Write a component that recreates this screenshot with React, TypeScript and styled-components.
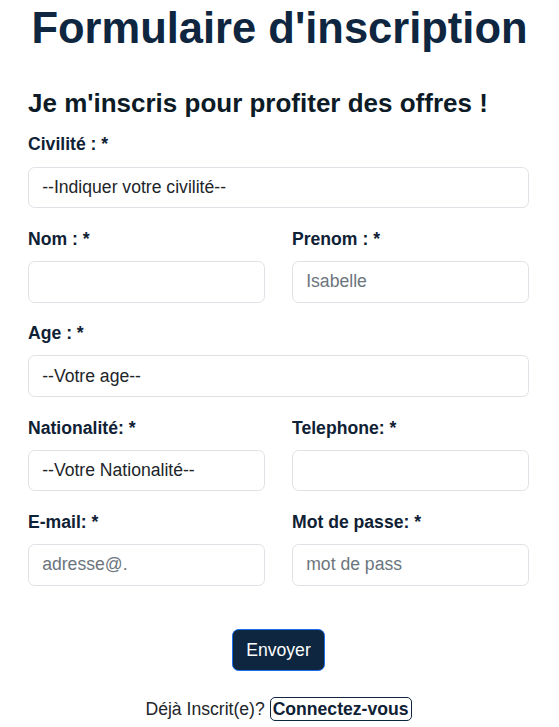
import React from "react";
import styled, { createGlobalStyle } from "styled-components";

const GlobalStyle = createGlobalStyle`
  html, body { margin: 0; padding: 0; background: #ffffff; }
  body {
    font-family: "Liberation Sans", Arial, sans-serif;
    font-size: 17.6px;
    line-height: 1.5;
    color: #212529;
  }
  * { box-sizing: border-box; }
`;

const Page = styled.main`
  padding-top: 2px;
`;

const Content = styled.div`
  padding: 0 30px 0 28px;
`;

const Title = styled.h1`
  margin: 0;
  font-size: 43.5px;
  line-height: 1.2;
  font-weight: 700;
  color: #0f2640;
  text-align: center;
  white-space: nowrap;
`;

const Subtitle = styled.h2`
  margin: 34px 0 12px;
  font-size: 26px;
  line-height: 1.2;
  font-weight: 700;
  color: #0d1b27;
`;

const Form = styled.form`
  display: flex;
  flex-direction: column;
`;

const Row = styled.div<{ $cols?: number }>`
  display: grid;
  grid-template-columns: repeat(${(p) => p.$cols ?? 1}, 1fr);
  column-gap: 27px;
`;

const Field = styled.div`
  display: flex;
  flex-direction: column;
  margin-bottom: 17.6px;
`;

const Label = styled.label`
  display: block;
  font-size: 17.6px;
  line-height: 1.5;
  font-weight: 700;
  color: #0f2135;
  margin-bottom: 8.8px;
`;

const controlCss = `
  display: block;
  width: 100%;
  height: 41.6px;
  padding: 6.6px 13.2px;
  font-family: "Liberation Sans", Arial, sans-serif;
  font-size: 17.6px;
  line-height: 1.5;
  color: #212529;
  background: #fff;
  border: 1px solid #dee2e6;
  border-radius: 6.6px;
  outline: none;
`;

const Input = styled.input`
  ${controlCss}
  &::placeholder { color: #6c757d; opacity: 1; }
`;

const Select = styled.select`
  ${controlCss}
  appearance: none;
  -webkit-appearance: none;
`;

const Actions = styled.div`
  display: flex;
  justify-content: center;
  margin-top: 26px;
`;

const SubmitButton = styled.button`
  height: 41.6px;
  padding: 6.6px 13.2px;
  font-family: "Liberation Sans", Arial, sans-serif;
  font-size: 17.6px;
  line-height: 1.5;
  color: #ffffff;
  background: #0e2640;
  border: 1px solid #1a6ff0;
  border-radius: 6.6px;
  cursor: pointer;
`;

const Footer = styled.p`
  margin: 25px 0 0;
  text-align: center;
  font-size: 17.6px;
  line-height: 1.5;
  color: #212529;
`;

const LoginLink = styled.a`
  padding: 1px 2px;
  font-weight: 700;
  color: #0f2135;
  text-decoration: none;
  border: 1px solid #0f2640;
  border-radius: 5px;
`;

export default function App() {
  return (
    <>
      <GlobalStyle />
      <Page>
        <Title>Formulaire d'inscription</Title>
        <Content>
          <Subtitle>Je m'inscris pour profiter des offres !</Subtitle>
          <Form onSubmit={(e) => e.preventDefault()}>
            <Row>
              <Field>
                <Label htmlFor="civ">Civilité : *</Label>
                <Select id="civ" defaultValue="">
                  <option value="">--Indiquer votre civilité--</option>
                  <option value="mme">Madame</option>
                  <option value="m">Monsieur</option>
                </Select>
              </Field>
            </Row>
            <Row $cols={2}>
              <Field>
                <Label htmlFor="nom">Nom : *</Label>
                <Input id="nom" type="text" />
              </Field>
              <Field>
                <Label htmlFor="prenom">Prenom : *</Label>
                <Input id="prenom" type="text" placeholder="Isabelle" />
              </Field>
            </Row>
            <Row>
              <Field>
                <Label htmlFor="age">Age : *</Label>
                <Select id="age" defaultValue="">
                  <option value="">--Votre age--</option>
                </Select>
              </Field>
            </Row>
            <Row $cols={2}>
              <Field>
                <Label htmlFor="nat">Nationalité: *</Label>
                <Select id="nat" defaultValue="">
                  <option value="">--Votre Nationalité--</option>
                </Select>
              </Field>
              <Field>
                <Label htmlFor="tel">Telephone: *</Label>
                <Input id="tel" type="tel" />
              </Field>
            </Row>
            <Row $cols={2}>
              <Field>
                <Label htmlFor="mail">E-mail: *</Label>
                <Input id="mail" type="email" placeholder="adresse@." />
              </Field>
              <Field>
                <Label htmlFor="pass">Mot de passe: *</Label>
                <Input id="pass" type="text" placeholder="mot de pass" />
              </Field>
            </Row>
            <Actions>
              <SubmitButton type="submit">Envoyer</SubmitButton>
            </Actions>
          </Form>
          <Footer>
            Déjà Inscrit(e)? <LoginLink href="#">Connectez-vous</LoginLink>
          </Footer>
        </Content>
      </Page>
    </>
  );
}
